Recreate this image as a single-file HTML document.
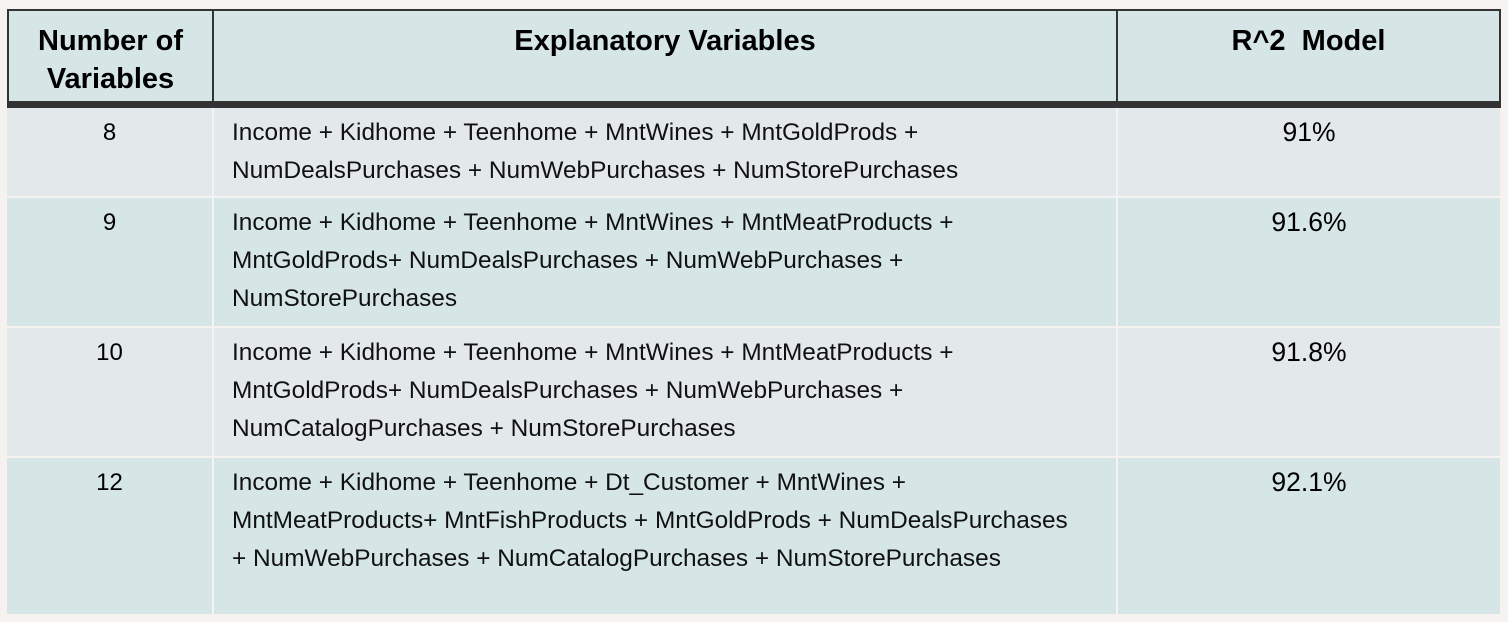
<!DOCTYPE html>
<html><head><style>
body{margin:0;width:1508px;height:622px;background:#f5f2ef;position:relative;overflow:hidden;font-family:"Liberation Sans",sans-serif;}
.c{position:absolute;box-sizing:border-box;}
.h{background:#d6e6e6;border:2px solid #333;}
.hd{font-weight:bold;font-size:29px;color:#000;text-align:center;line-height:38px;letter-spacing:0;}
.num{font-size:24px;text-align:center;padding-top:11px;}
.pct{font-size:26.5px;text-align:center;padding-top:9px;}
.txt{font-size:24.4px;line-height:38px;padding-left:18px;padding-top:6px;white-space:nowrap;letter-spacing:0;color:#111;}
.a{background:#e3e8eb;}
.b{background:#d6e6e6;}
</style></head><body>
<div class="c h hd" style="left:7px;top:9px;width:207px;height:96px;padding-top:11px;">Number of<br>Variables</div>
<div class="c h hd" style="left:212px;top:9px;width:906px;height:96px;padding-top:11px;">Explanatory Variables</div>
<div class="c h hd" style="left:1116px;top:9px;width:385px;height:96px;padding-top:11px;">R^2&nbsp; Model</div>
<div class="c" style="left:7px;top:101px;width:1494px;height:7px;background:#333;"></div>

<div class="c a num" style="left:7px;top:108px;width:205px;height:88px;">8</div>
<div class="c a txt" style="left:214px;top:108px;width:902px;height:88px;">Income + Kidhome + Teenhome + MntWines + MntGoldProds +<br>NumDealsPurchases + NumWebPurchases + NumStorePurchases</div>
<div class="c a pct" style="left:1118px;top:108px;width:382px;height:88px;">91%</div>

<div class="c b num" style="left:7px;top:198px;width:205px;height:128px;">9</div>
<div class="c b txt" style="left:214px;top:198px;width:902px;height:128px;">Income + Kidhome + Teenhome + MntWines + MntMeatProducts +<br>MntGoldProds+ NumDealsPurchases + NumWebPurchases +<br>NumStorePurchases</div>
<div class="c b pct" style="left:1118px;top:198px;width:382px;height:128px;">91.6%</div>

<div class="c a num" style="left:7px;top:328px;width:205px;height:128px;">10</div>
<div class="c a txt" style="left:214px;top:328px;width:902px;height:128px;">Income + Kidhome + Teenhome + MntWines + MntMeatProducts +<br>MntGoldProds+ NumDealsPurchases + NumWebPurchases +<br>NumCatalogPurchases + NumStorePurchases</div>
<div class="c a pct" style="left:1118px;top:328px;width:382px;height:128px;">91.8%</div>

<div class="c b num" style="left:7px;top:458px;width:205px;height:156px;">12</div>
<div class="c b txt" style="left:214px;top:458px;width:902px;height:156px;">Income + Kidhome + Teenhome + Dt_Customer + MntWines +<br>MntMeatProducts+ MntFishProducts + MntGoldProds + NumDealsPurchases<br>+ NumWebPurchases + NumCatalogPurchases + NumStorePurchases</div>
<div class="c b pct" style="left:1118px;top:458px;width:382px;height:156px;">92.1%</div>
</body></html>
